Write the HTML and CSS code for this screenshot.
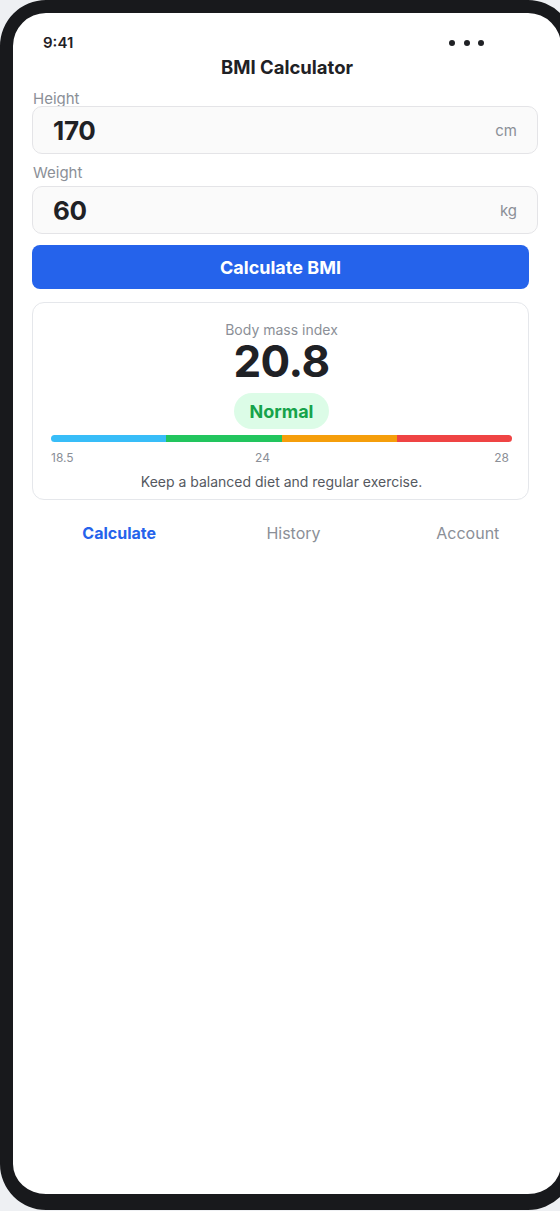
FILE: index.html
```html
<!DOCTYPE html>
<html lang="en">
<head>
<meta charset="utf-8">
<title>BMI Calculator</title>
<link rel="stylesheet" href="styles.css">
</head>
<body>
<div class="phone">
  <div class="screen">
    <div class="status">
      <span class="time">9:41</span>
      <span class="dots"><i></i><i></i><i></i></span>
    </div>
    <h1 class="title">BMI Calculator</h1>

    <label class="label label-first">Height</label>
    <div class="field field-first">
      <span class="value">170</span>
      <span class="unit">cm</span>
    </div>

    <label class="label">Weight</label>
    <div class="field">
      <span class="value">60</span>
      <span class="unit">kg</span>
    </div>

    <button class="btn">Calculate BMI</button>

    <section class="card">
      <div class="card-label">Body mass index</div>
      <div class="bmi">20.8</div>
      <div class="pill-row"><span class="pill">Normal</span></div>
      <div class="bar">
        <span class="seg seg-blue"></span>
        <span class="seg seg-green"></span>
        <span class="seg seg-orange"></span>
        <span class="seg seg-red"></span>
      </div>
      <div class="scale">
        <span>18.5</span>
        <span>24</span>
        <span>28</span>
      </div>
      <p class="tip">Keep a balanced diet and regular exercise.</p>
    </section>

    <nav class="tabs">
      <span class="tab active">Calculate</span>
      <span class="tab">History</span>
      <span class="tab">Account</span>
    </nav>
  </div>
</div>
</body>
</html>
```

FILE: styles.css
```css
* { box-sizing: border-box; }

html, body {
  margin: 0;
  padding: 0;
}

body {
  background: #eef0f3;
  font-family: Inter, "Noto Sans", "Liberation Sans", sans-serif;
  color: #1f2125;
  overflow: hidden;
  width: 560px;
  height: 1211px;
}

.phone {
  width: 574px;
  height: 1210px;
  border: 13px solid #18191c;
  border-bottom-width: 16px;
  border-radius: 46px;
  background: #ffffff;
  overflow: hidden;
}

.screen {
  padding: 19px 19px 0 19px;
}

.status {
  display: flex;
  justify-content: space-between;
  align-items: center;
  height: 22px;
  padding: 0 58px 0 11px;
}

.time {
  font-size: 15px;
  font-weight: 600;
  line-height: 22px;
  color: #1f2125;
}

.dots {
  display: flex;
  gap: 8.5px;
}

.dots i {
  display: block;
  width: 6px;
  height: 6px;
  border-radius: 50%;
  background: #1f2125;
}

.title {
  margin: 1px 0 0 0;
  font-size: 18.5px;
  font-weight: 700;
  line-height: 24px;
  text-align: center;
  color: #1f2125;
}

.label {
  display: block;
  margin-top: 10px;
  padding-left: 1px;
  font-size: 15px;
  line-height: 18px;
  color: #8b8f97;
}

.label-first {
  margin-top: 11px;
}

.field {
  position: relative;
  width: 506px;
  height: 48px;
  margin-top: 4px;
  display: flex;
  align-items: center;
  justify-content: space-between;
  padding: 0 20px 0 20px;
  background: #fafafa;
  border: 1px solid #e4e4e7;
  border-radius: 10px;
}

.field-first {
  margin-top: -2px;
}

.value {
  font-size: 26px;
  font-weight: 700;
  color: #1f2125;
  letter-spacing: -0.3px;
}

.unit {
  font-size: 15px;
  color: #8b8f97;
}

.btn {
  display: block;
  width: 497px;
  height: 44px;
  margin-top: 11px;
  border: none;
  border-radius: 8px;
  background: #2563eb;
  color: #ffffff;
  font-family: inherit;
  font-size: 18px;
  font-weight: 700;
}

.card {
  width: 497px;
  margin-top: 13px;
  padding: 18px 16px 7px 18px;
  border: 1px solid #e5e7eb;
  border-radius: 12px;
  text-align: center;
}

.card-label {
  font-size: 14px;
  line-height: 18px;
  color: #8b8f97;
}

.bmi {
  font-size: 44px;
  font-weight: 700;
  line-height: 44px;
  letter-spacing: -0.5px;
  color: #1f2125;
}

.pill-row {
  margin-top: 10px;
  display: flex;
  justify-content: center;
}

.pill {
  display: inline-flex;
  align-items: center;
  justify-content: center;
  width: 95px;
  height: 36px;
  border-radius: 18px;
  background: #dcfce7;
  color: #16a34a;
  font-size: 18px;
  font-weight: 700;
}

.bar {
  display: flex;
  height: 7px;
  margin-top: 6px;
  border-radius: 4px;
  overflow: hidden;
}

.seg { flex: 1; }
.seg-blue { background: #38bdf8; }
.seg-green { background: #22c55e; }
.seg-orange { background: #f59e0b; }
.seg-red { background: #ef4444; }

.scale {
  display: grid;
  grid-template-columns: 204px 1fr auto;
  margin-top: 8px;
  padding-right: 3px;
  font-size: 12px;
  line-height: 16px;
  color: #8b8f97;
  text-align: left;
}

.tip {
  margin: 6px 0 0 0;
  font-size: 14px;
  line-height: 20px;
  color: #55595f;
}

.tabs {
  display: grid;
  grid-template-columns: 1fr 1fr 1fr;
  margin-top: 23px;
  margin-right: -13px;
}

.tab {
  text-align: center;
  font-size: 16px;
  line-height: 20px;
  color: #8b8f97;
}

.tab.active {
  color: #2563eb;
  font-weight: 700;
}
```
